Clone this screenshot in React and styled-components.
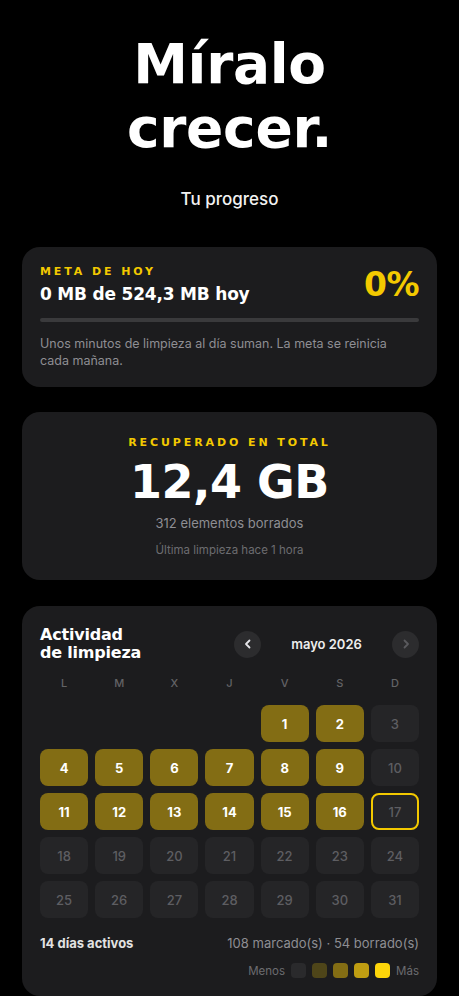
import React from 'react';
import styled, { createGlobalStyle } from 'styled-components';

const GlobalStyle = createGlobalStyle`
  html, body {
    margin: 0;
    padding: 0;
    background: #000;
  }
  body {
    font-family: Inter, "Noto Sans", sans-serif;
    color: #fff;
  }
`;

const DISPLAY = `"DejaVu Sans", Inter, sans-serif`;

const Page = styled.div`
  width: 459px;
  min-height: 996px;
  box-sizing: border-box;
  padding: 32px 22px 0;
  display: flex;
  flex-direction: column;
  align-items: stretch;
`;

const Hero = styled.h1`
  margin: 0;
  font-family: ${DISPLAY};
  font-weight: 700;
  font-size: 55px;
  line-height: 64px;
  letter-spacing: -0.3px;
  text-align: center;
  color: #fff;
`;

const Subtitle = styled.p`
  margin: 29px 0 0;
  text-align: center;
  font-size: 17px;
  font-weight: 500;
  color: #f2f2f2;
`;

const Card = styled.section`
  background: #1c1c1e;
  border-radius: 18px;
  padding: ${(p) => p.$pad || '18px'};
  margin-top: ${(p) => p.$top || '25px'};
  display: flex;
  flex-direction: column;
  align-items: ${(p) => (p.$center ? 'center' : 'stretch')};
`;

const Eyebrow = styled.div`
  font-family: ${DISPLAY};
  font-size: 11px;
  font-weight: 700;
  letter-spacing: 2.9px;
  color: #f3c900;
  line-height: 14px;
`;

const GoalRow = styled.div`
  display: flex;
  justify-content: space-between;
  align-items: center;
`;

const GoalText = styled.div`
  font-family: ${DISPLAY};
  font-size: 17px;
  font-weight: 700;
  letter-spacing: -0.2px;
  margin-top: 5px;
`;

const Percent = styled.div`
  font-family: ${DISPLAY};
  font-size: 33px;
  line-height: 38px;
  font-weight: 700;
  color: #f3c900;
  letter-spacing: -0.5px;
`;

const Track = styled.div`
  height: 4px;
  border-radius: 2px;
  background: #3a3a3c;
  margin-top: 14px;
  overflow: hidden;
`;

const Fill = styled.div`
  height: 100%;
  background: #f3c900;
`;

const Note = styled.p`
  margin: 13px 0 0;
  font-size: 12.5px;
  line-height: 17px;
  color: #8e8e93;
`;

const BigNumber = styled.div`
  font-family: ${DISPLAY};
  font-size: 46px;
  font-weight: 700;
  line-height: 54px;
  letter-spacing: -0.5px;
  margin-top: 5px;
`;

const Meta = styled.div`
  font-size: ${(p) => p.$size || '13px'};
  color: ${(p) => p.$color || '#8e8e93'};
  margin-top: ${(p) => p.$top || '6px'};
`;

const CalHeader = styled.div`
  display: flex;
  justify-content: space-between;
  align-items: center;
`;

const CalTitle = styled.h2`
  margin: 0;
  font-family: ${DISPLAY};
  font-size: 16px;
  font-weight: 700;
  line-height: 18px;
  letter-spacing: -0.2px;
`;

const MonthNav = styled.div`
  display: flex;
  align-items: center;
  gap: 6px;
`;

const NavButton = styled.button`
  width: 27px;
  height: 27px;
  border-radius: 50%;
  border: none;
  padding: 0;
  background: #2c2c2e;
  color: ${(p) => (p.disabled ? '#5a5a5e' : '#e5e5ea')};
  display: flex;
  align-items: center;
  justify-content: center;
`;

const MonthLabel = styled.div`
  width: 119px;
  text-align: center;
  font-size: 13px;
  font-weight: 600;
  color: #ededed;
`;

const Grid = styled.div`
  display: grid;
  grid-template-columns: repeat(7, 1fr);
  column-gap: 7px;
  row-gap: 7px;
  margin-top: ${(p) => p.$top || '0'};
`;

const Weekday = styled.div`
  text-align: center;
  font-size: 11px;
  font-weight: 500;
  color: #636366;
  height: 14px;
  line-height: 14px;
  margin-bottom: 15px;
`;

const Day = styled.div`
  height: 37px;
  border-radius: 8px;
  box-sizing: border-box;
  display: flex;
  align-items: center;
  justify-content: center;
  font-size: 13px;
  font-weight: ${(p) => (p.$active ? 700 : 500)};
  color: ${(p) => (p.$active ? '#fff' : '#5e5e62')};
  background: ${(p) => (p.$active ? '#836d14' : p.$empty ? 'transparent' : '#252527')};
  border: ${(p) => (p.$today ? '2px solid #f3c900' : 'none')};
`;

const Summary = styled.div`
  display: flex;
  justify-content: space-between;
  align-items: center;
  margin-top: 17px;
  font-size: 13px;
`;

const Strong = styled.span`
  font-weight: 700;
  color: #e2e2e2;
`;

const Muted = styled.span`
  color: #8e8e93;
`;

const Legend = styled.div`
  display: flex;
  justify-content: flex-end;
  align-items: center;
  gap: 6px;
  margin-top: 12px;
  font-size: 11.5px;
  color: #6c6c70;
`;

const Swatch = styled.span`
  width: 15px;
  height: 15px;
  border-radius: 4px;
  background: ${(p) => p.$color};
`;

const Chevron = ({ dir }) => (
  <svg width="12" height="12" viewBox="0 0 12 12" fill="none">
    <path
      d={dir === 'left' ? 'M7.5 2.5 L4 6 L7.5 9.5' : 'M4.5 2.5 L8 6 L4.5 9.5'}
      stroke="currentColor"
      strokeWidth="1.8"
      strokeLinecap="round"
      strokeLinejoin="round"
    />
  </svg>
);

const weekdays = ['L', 'M', 'X', 'J', 'V', 'S', 'D'];
const activeDays = new Set([1, 2, 4, 5, 6, 7, 8, 9, 11, 12, 13, 14, 15, 16]);
const today = 17;
const leading = 4;

function Calendar() {
  const cells = [];
  for (let i = 0; i < leading; i++) cells.push(<Day key={`e${i}`} $empty />);
  for (let d = 1; d <= 31; d++) {
    cells.push(
      <Day key={d} $active={activeDays.has(d)} $today={d === today}>
        {d}
      </Day>
    );
  }
  return (
    <Card $pad="20px 18px 18px" $top="26px">
      <CalHeader>
        <CalTitle>
          Actividad
          <br />
          de limpieza
        </CalTitle>
        <MonthNav>
          <NavButton aria-label="Mes anterior">
            <Chevron dir="left" />
          </NavButton>
          <MonthLabel>mayo 2026</MonthLabel>
          <NavButton disabled aria-label="Mes siguiente">
            <Chevron dir="right" />
          </NavButton>
        </MonthNav>
      </CalHeader>
      <Grid $top="14px">
        {weekdays.map((w) => (
          <Weekday key={w}>{w}</Weekday>
        ))}
      </Grid>
      <Grid>{cells}</Grid>
      <Summary>
        <Strong>14 días activos</Strong>
        <Muted>108 marcado(s) · 54 borrado(s)</Muted>
      </Summary>
      <Legend>
        Menos
        <Swatch $color="#2a2a2c" />
        <Swatch $color="#4e4519" />
        <Swatch $color="#836d14" />
        <Swatch $color="#bf9d12" />
        <Swatch $color="#fdd50a" />
        Más
      </Legend>
    </Card>
  );
}

export default function App() {
  return (
    <>
      <GlobalStyle />
      <Page>
        <Hero>
          Míralo
          <br />
          crecer.
        </Hero>
        <Subtitle>Tu progreso</Subtitle>

        <Card $top="38px">
          <GoalRow>
            <div>
              <Eyebrow>META DE HOY</Eyebrow>
              <GoalText>0 MB de 524,3 MB hoy</GoalText>
            </div>
            <Percent>0%</Percent>
          </GoalRow>
          <Track>
            <Fill style={{ width: '0%' }} />
          </Track>
          <Note>
            Unos minutos de limpieza al día suman. La meta se reinicia cada mañana.
          </Note>
        </Card>

        <Card $center $pad="24px 18px 23px">
          <Eyebrow>RECUPERADO EN TOTAL</Eyebrow>
          <BigNumber>12,4 GB</BigNumber>
          <Meta>312 elementos borrados</Meta>
          <Meta $size="11.5px" $color="#6c6c70" $top="12px">
            Última limpieza hace 1 hora
          </Meta>
        </Card>

        <Calendar />
      </Page>
    </>
  );
}
